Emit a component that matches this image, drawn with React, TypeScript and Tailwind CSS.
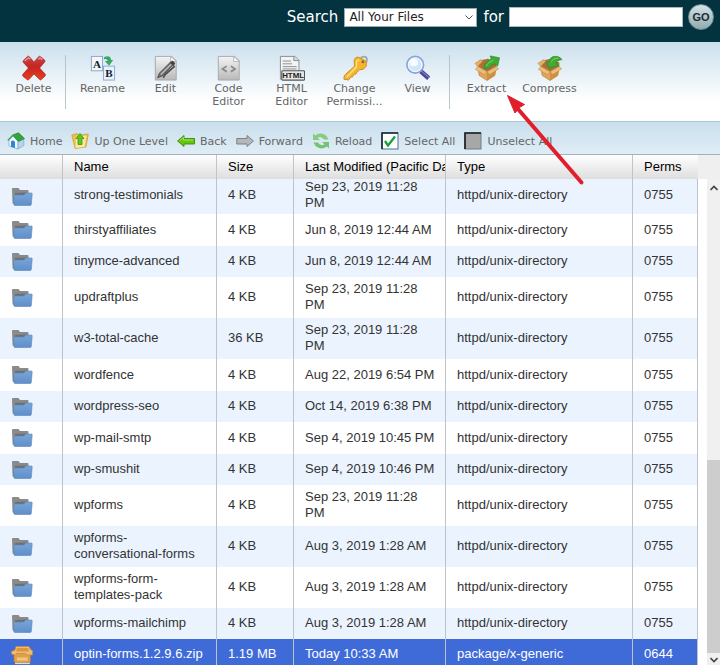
import type { ReactNode } from "react";

type FileRow = { name: string; size: string; date: string; type: string; perms: string; selected?: boolean };

const DIR = "httpd/unix-directory";

const files: FileRow[] = [
  { name: "strong-testimonials", size: "4 KB", date: "Sep 23, 2019 11:28 PM", type: DIR, perms: "0755" },
  { name: "thirstyaffiliates", size: "4 KB", date: "Jun 8, 2019 12:44 AM", type: DIR, perms: "0755" },
  { name: "tinymce-advanced", size: "4 KB", date: "Jun 8, 2019 12:44 AM", type: DIR, perms: "0755" },
  { name: "updraftplus", size: "4 KB", date: "Sep 23, 2019 11:28 PM", type: DIR, perms: "0755" },
  { name: "w3-total-cache", size: "36 KB", date: "Sep 23, 2019 11:28 PM", type: DIR, perms: "0755" },
  { name: "wordfence", size: "4 KB", date: "Aug 22, 2019 6:54 PM", type: DIR, perms: "0755" },
  { name: "wordpress-seo", size: "4 KB", date: "Oct 14, 2019 6:38 PM", type: DIR, perms: "0755" },
  { name: "wp-mail-smtp", size: "4 KB", date: "Sep 4, 2019 10:45 PM", type: DIR, perms: "0755" },
  { name: "wp-smushit", size: "4 KB", date: "Sep 4, 2019 10:46 PM", type: DIR, perms: "0755" },
  { name: "wpforms", size: "4 KB", date: "Sep 23, 2019 11:28 PM", type: DIR, perms: "0755" },
  { name: "wpforms-conversational-forms", size: "4 KB", date: "Aug 3, 2019 1:28 AM", type: DIR, perms: "0755" },
  { name: "wpforms-form-templates-pack", size: "4 KB", date: "Aug 3, 2019 1:28 AM", type: DIR, perms: "0755" },
  { name: "wpforms-mailchimp", size: "4 KB", date: "Aug 3, 2019 1:28 AM", type: DIR, perms: "0755" },
  { name: "optin-forms.1.2.9.6.zip", size: "1.19 MB", date: "Today 10:33 AM", type: "package/x-generic", perms: "0644", selected: true },
];

/* ---------- toolbar icons, drawn on a 28 x 28 grid ---------- */

function Big({ children }: { children: ReactNode }) {
  return (
    <svg viewBox="0 0 28 28" className="mt-px mb-px h-[26px] w-[26px]" aria-hidden="true">
      {children}
    </svg>
  );
}

function DeleteIcon() {
  return (
    <Big>
      <defs>
        <linearGradient id="del" x1="0" y1="0" x2="0" y2="1">
          <stop offset="0" stopColor="#c8474a" />
          <stop offset="0.45" stopColor="#c32523" />
          <stop offset="1" stopColor="#ea3f1e" />
        </linearGradient>
      </defs>
      <path d="M2.500 6 7 1.500Q8 0.800 9 1.800L14 7.500 19 1.800Q20 0.800 21 1.800L25.500 5.500Q26.300 6.500 25.500 7.500L20 14 26 20.500Q26.800 21.500 26 22.500L22 26.500Q21 27.300 20 26.500L14 20.500 8.500 26.500Q7.500 27.300 6.500 26.500L2 22.800Q1.200 21.800 2 20.800L8 14 2.500 8Q1.800 7 2.500 6Z" fill="url(#del)" stroke="#a8231e" strokeWidth="0.7" />
      <path d="M4 6.500 8 3 10 4.500M18.500 4.500 20.500 3.200 23 5" fill="none" stroke="#e59a98" strokeWidth="1.400" />
    </Big>
  );
}

function RenameIcon() {
  return (
    <Big>
      <rect x="1.500" y="1.500" width="12" height="15.500" fill="#f2f7fd" stroke="#8ba4c6" />
      <rect x="14.500" y="12" width="12" height="15" fill="#e8f1fc" stroke="#8ba8ce" />
      <text x="7.500" y="13.500" textAnchor="middle" fontSize="12" fontWeight="700" fontFamily="Liberation Serif, serif" fill="#151c2c">A</text>
      <text x="20.500" y="24" textAnchor="middle" fontSize="12" fontWeight="700" fontFamily="Liberation Serif, serif" fill="#151c2c">B</text>
      <path d="M15 2.500Q22 -1 22.800 5.500H25L20.500 11.500 16 6.500H19Q18.500 3.500 15 4.500Z" fill="#3aa866" />
    </Big>
  );
}

function Page() {
  return (
    <>
      <defs>
        <linearGradient id="page" x1="0" y1="0" x2="0" y2="1">
          <stop offset="0" stopColor="#f4f4f4" />
          <stop offset="1" stopColor="#b9b9b9" />
        </linearGradient>
      </defs>
      <path d="M2.500 1.500H20L25 6V27H2.500Z" fill="url(#page)" stroke="#a3a7aa" />
      <path d="M19 1.500V7H25Z" fill="#fff" stroke="#a3a7aa" strokeWidth="0.800" />
    </>
  );
}

function EditIcon() {
  return (
    <Big>
      <Page />
      <path d="M5 24.500 7 19.500 19 7.500 22 10.500 10 22.500Z" fill="#777" stroke="#3f3f3f" strokeWidth="0.900" />
      <path d="M8.500 21 20 9.500" stroke="#c4c4c4" strokeWidth="1.200" />
      <path d="M11 24.500 13 21 23.500 12" fill="none" stroke="#4a4a4a" strokeWidth="1.800" />
      <path d="M18 8 21 6 24 9 22 12Z" fill="#444" />
    </Big>
  );
}

function CodeIcon() {
  return (
    <Big>
      <Page />
      <path d="M11.500 12 7 15 11.500 18M16 12 20.500 15 16 18" fill="none" stroke="#858585" strokeWidth="1.800" />
    </Big>
  );
}

function HtmlIcon() {
  return (
    <Big>
      <path d="M1.500 1.500H17L21.500 5.500V26H1.500Z" fill="#f3f4f5" stroke="#85898c" />
      <path d="M16 1.500V6H21.500" fill="#ddd" stroke="#85898c" />
      <path d="M4 6.500H13M4 9.500H14M4 12.500H19M4 15H19" stroke="#85898c" />
      <rect x="3" y="17" width="24.500" height="10" rx="1" fill="#e6e6e6" stroke="#555" strokeWidth="1.200" />
      <text x="15.200" y="25" textAnchor="middle" fontSize="8.500" fontWeight="700" fontFamily="Liberation Sans, sans-serif" fill="#222">HTML</text>
    </Big>
  );
}

function KeyIcon() {
  return (
    <Big>
      <circle cx="23.500" cy="5" r="3.300" fill="none" stroke="#a2a7ab" strokeWidth="2" />
      <path d="M13 6Q14 1.500 18 2.500L24 5.500Q27.500 8 26 12 23.500 16.500 19 16L16 18.500 15 20.500 12.500 21 11.500 23.500 9 24 7 27 2 26 2.500 22 13.500 12Z" fill="#f5b52c" stroke="#c98a22" />
      <path d="M5 24 15.500 13 15.500 7 18.500 5" fill="none" stroke="#ffe08a" strokeWidth="1.500" />
      <circle cx="22.500" cy="7.500" r="1.500" fill="#8b6a26" />
    </Big>
  );
}

function ViewIcon() {
  return (
    <Big>
      <path d="M17 17.500 25.500 25" stroke="#4d4396" strokeWidth="4.800" strokeLinecap="butt" />
      <path d="M17.500 17 26 24.500" stroke="#8178bd" strokeWidth="1.200" />
      <circle cx="11" cy="10.500" r="9" fill="#d0e6fa" stroke="#8ba3dc" strokeWidth="1.800" />
      <circle cx="11" cy="10.500" r="7.300" fill="none" stroke="#fff" strokeWidth="1" />
      <ellipse cx="9.500" cy="8" rx="4.500" ry="4" fill="#f7fcff" />
    </Big>
  );
}

function Box() {
  return (
    <>
      <path d="M4 13 14 18 24 12.500 22.500 22 14 27.500 5.500 22Z" fill="#dfa457" stroke="#b57a33" strokeWidth="0.600" />
      <path d="M14 18V27.500L22.500 22 24 12.500Z" fill="#cd9046" />
      <path d="M4 12 6 6 15 4 24 8 24 12.500 14 18Z" fill="#a87236" />
      <path d="M4 12.500 1.500 15.500 11 21 14 18ZM24 12.500 26.500 15 17 21 14 18Z" fill="#edbd7a" stroke="#c28b45" strokeWidth="0.600" />
      <path d="M4 12.500 1 9 7 5 9.500 6.500Z" fill="#e3ae66" stroke="#c28b45" strokeWidth="0.600" />
    </>
  );
}

function ExtractIcon() {
  return (
    <Big>
      <Box />
      <path d="M11 14.500Q11 7.500 18.500 4.500L17.500 1 27.500 3 25.500 12 22.500 9.500Q18 10 16.500 14Z" fill="#3fab36" stroke="#278a28" strokeWidth="0.700" />
      <path d="M13 12Q15 7.500 21 5.500" fill="none" stroke="#7ed65b" />
    </Big>
  );
}

function CompressIcon() {
  return (
    <Big>
      <Box />
      <path d="M27 5Q23 0 16.500 2 13.500 3.500 13 7.500H10L13 14 23.500 11.500 20.500 9Q21 5.500 27 5Z" fill="#3fab36" stroke="#278a28" strokeWidth="0.700" />
      <path d="M15.500 7.500Q17 3.500 23 3.500" fill="none" stroke="#7ed65b" />
    </Big>
  );
}

/* ---------- navigation icons, 18 x 18 ---------- */

function Small({ children }: { children: ReactNode }) {
  return (
    <svg viewBox="0 0 18 18" className="h-[18px] w-[18px] shrink-0" aria-hidden="true">
      {children}
    </svg>
  );
}

function HomeIcon() {
  return (
    <Small>
      <path d="M2 8.500 6 4 11 9.500V17L2 14Z" fill="#f3f9ff" stroke="#7ba6cf" strokeWidth="0.700" />
      <path d="M11 9.500 16.800 7V13.500L11 17Z" fill="#b8d4ee" stroke="#7fa6cc" strokeWidth="0.700" />
      <path d="M5.500 3 11.500 0.800 17.500 6.500 11.500 9.500Z" fill="#36a43b" stroke="#248a33" strokeWidth="0.700" />
      <path d="M6 3 0.800 8.500" stroke="#4aa552" strokeWidth="1.400" />
      <path d="M4 14.800V9.500Q6 7.500 8 10V16Z" fill="#2987d4" />
    </Small>
  );
}

function UpIcon() {
  return (
    <Small>
      <path d="M0.800 3 6 1.500 8 3 17.300 2 15 15 4 16.500Z" fill="#eec04c" stroke="#cf9a35" strokeWidth="0.700" />
      <path d="M5 5 15.500 3.500 13.500 15 4.500 16Z" fill="#fbe9a0" />
      <path d="M9 1.500 13 6.500H11V12.500H7V6.500H5Z" fill="#5cc71d" stroke="#3b9420" strokeWidth="0.800" />
    </Small>
  );
}

function BackIcon() {
  return (
    <Small>
      <path d="M0.500 9 7 3.500V6.500H17.500V12H7V14.500Z" fill="#62c60d" stroke="#3c8a0c" strokeWidth="0.900" />
      <path d="M3 8.500 6.500 5.500V8H16" fill="none" stroke="#b2ec6c" strokeWidth="0.800" />
    </Small>
  );
}

function ForwardIcon() {
  return (
    <Small>
      <path d="M17.500 9 11 3.500V6.500H0.800V12H11V14.500Z" fill="#b5b8ba" stroke="#7d8184" strokeWidth="1" />
    </Small>
  );
}

function ReloadIcon() {
  return (
    <Small>
      <path d="M1 1.500 3 3.500Q9 -0.500 14.500 4L16.500 7.500H12Q9.500 3.500 5.500 5.800L8 8H1Z" fill="#83cc80" />
      <path d="M17 16.500 15 14.500Q9 18.500 3.500 14L1.500 10.500H6Q8.500 14.500 12.500 12.200L10 10H17Z" fill="#74c374" />
    </Small>
  );
}

function CheckedIcon() {
  return (
    <Small>
      <rect x="1" y="1" width="16" height="16" fill="#fff" stroke="#4f7191" />
      <path d="M1 17V1H17" fill="none" stroke="#142536" strokeWidth="1.600" />
      <path d="M4 9 7 13.500 14 4.500" fill="none" stroke="#16a035" strokeWidth="2.300" />
    </Small>
  );
}

function UncheckedIcon() {
  return (
    <Small>
      <rect x="1" y="1" width="16" height="16" fill="#a7a7a7" stroke="#6e7d8d" />
      <path d="M1 17V1H17" fill="none" stroke="#151a22" strokeWidth="1.600" />
    </Small>
  );
}

/* ---------- table icons ---------- */

function FolderIcon() {
  return (
    <svg viewBox="0 0 22 20" className="h-5 w-[22px]" aria-hidden="true">
      <defs>
        <linearGradient id="folder" x1="0" y1="0" x2="0" y2="1">
          <stop offset="0" stopColor="#79a5d8" />
          <stop offset="1" stopColor="#5f8fca" />
        </linearGradient>
      </defs>
      <path d="M1 2Q1 1 2 1H7.500L9 3H16.500Q17.500 3 17.500 4V17H3Q1.500 17 1.500 15.500Z" fill="#8a8a8a" />
      <path d="M4 6 15.500 5.500V8H4Z" fill="#6d6f72" />
      <path d="M3.500 8H13L14.500 6H20.500Q21.300 6 21.200 7L20.300 17.500Q20.200 18.500 19.200 18.500H4Q3 18.500 2.900 17.500L2.800 9Z" fill="url(#folder)" stroke="#5b86ba" strokeWidth="0.600" />
    </svg>
  );
}

function ZipIcon() {
  return (
    <svg viewBox="0 0 22 20" className="h-5 w-[22px]" aria-hidden="true">
      <path d="M3 8H19.500V16Q19.500 18 17.500 18H5Q3 18 3 16Z" fill="#dfa04c" stroke="#b87a2e" strokeWidth="0.700" />
      <path d="M5 1.500H18L19.500 4.500 21.500 5.500V10H16L14.500 8.500H5.500L4 10 0.500 9V6.500L4 5Z" fill="#f0bb6c" stroke="#c98a3a" strokeWidth="0.700" />
      <path d="M6 3H17L18 6.500H5Z" fill="#d9983f" />
      <path d="M6 12.500H16.500V15.500H6Z" fill="#f2c581" />
      <path d="M4 18.500H19" stroke="#cfdcf5" strokeWidth="1.200" />
    </svg>
  );
}

/* ---------- controls ---------- */

function Tool({ icon, label }: { icon: ReactNode; label: ReactNode }) {
  return (
    <button type="button" className="flex w-[63px] shrink-0 flex-col items-center text-[11px] leading-[13px]">
      {icon}
      <span className="max-w-full">{label}</span>
    </button>
  );
}

function Divider() {
  return <span className="mt-px mr-[5px] h-[54px] w-px shrink-0 bg-[#b9c5cd]" />;
}

function Nav({ icon, label }: { icon: ReactNode; label: string }) {
  return (
    <button type="button" className="flex shrink-0 items-center gap-[5px] whitespace-nowrap text-[11px] leading-[13px]">
      {icon}
      {label}
    </button>
  );
}

const head = "overflow-hidden border-r border-[#c3c3c3] pl-[11px] text-left font-normal whitespace-nowrap last:border-r-0";
const cell = "border-r border-[#bcc3cb] pt-1 pb-[5px] pl-[11px] pr-2 align-middle group-first:pt-0 group-first:pb-[3px]";

export default function App() {
  return (
    <div className="relative flex h-screen flex-col overflow-hidden bg-white font-['DejaVu_Sans',sans-serif] text-[#666]">
      <header className="flex h-[42px] shrink-0 items-start justify-end bg-[#02333f] pt-1 pr-[6px] text-[15px] text-white">
        <div className="flex h-[26px] items-center">
          <label htmlFor="scope" className="mr-[6px]">Search</label>
          <span className="relative mr-[6px] block h-[19px] w-[133px]">
            <select id="scope" className="block h-full w-full appearance-none border border-[#9aa9ad] bg-white pl-1 text-[12px] leading-[16px] text-[#222]">
              <option>All Your Files</option>
            </select>
            <svg viewBox="0 0 8 5" className="pointer-events-none absolute top-[7px] right-1 h-[5px] w-2" aria-hidden="true">
              <path d="M0.500 0.500 4 4 7.500 0.500" fill="none" stroke="#555" />
            </svg>
          </span>
          <label htmlFor="query" className="mr-[5px]">for</label>
          <input id="query" type="text" className="mr-[5px] h-5 w-[174px] border border-[#a9b7ba] bg-white px-1 text-[12px] text-[#222]" />
          <button type="button" className="h-[26px] w-[26px] rounded-full border border-[#6f8d94] bg-linear-to-b from-[#d5e3e6] to-[#90abb1] text-center font-['Liberation_Sans',sans-serif] text-[11px] leading-[24px] font-bold text-[#1d2b30]">
            GO
          </button>
        </div>
      </header>

      <div className="flex h-20 shrink-0 items-start border-b border-[#a9c6d5] bg-linear-to-b from-[#cbe0ed] to-white to-75% pt-3 pl-[2px]">
        <Tool icon={<DeleteIcon />} label="Delete" />
        <Divider />
        <Tool icon={<RenameIcon />} label="Rename" />
        <Tool icon={<EditIcon />} label="Edit" />
        <Tool icon={<CodeIcon />} label={<>Code<br />Editor</>} />
        <Tool icon={<HtmlIcon />} label={<>HTML<br />Editor</>} />
        <Tool icon={<KeyIcon />} label={<>Change<br />Permissi...</>} />
        <Tool icon={<ViewIcon />} label="View" />
        <Divider />
        <Tool icon={<ExtractIcon />} label="Extract" />
        <Tool icon={<CompressIcon />} label="Compress" />
      </div>

      <nav className="flex h-[33px] shrink-0 items-center gap-[9px] border-b border-[#9fb3be] bg-linear-to-b from-[#c9dfec] to-[#e0edf6] pt-[6px] pl-[7px]">
        <Nav icon={<HomeIcon />} label="Home" />
        <Nav icon={<UpIcon />} label="Up One Level" />
        <Nav icon={<BackIcon />} label="Back" />
        <Nav icon={<ForwardIcon />} label="Forward" />
        <Nav icon={<ReloadIcon />} label="Reload" />
        <Nav icon={<CheckedIcon />} label="Select All" />
        <Nav icon={<UncheckedIcon />} label="Unselect All" />
      </nav>

      <main className="flex min-h-0 flex-1 font-['Liberation_Sans',Arial,sans-serif] text-[13px] leading-4 text-[#333]">
        <div className="min-w-0 flex-1 overflow-hidden">
          <table className="w-full table-fixed border-separate border-spacing-0">
            <colgroup>
              <col className="w-[63px]" />
              <col className="w-[154px]" />
              <col className="w-[77px]" />
              <col className="w-[152px]" />
              <col />
              <col className="w-[65px]" />
            </colgroup>
            <thead className="text-black">
              <tr className="h-6 bg-linear-to-b from-white to-[#dedede]">
                <th className={head} aria-label="Icon" />
                <th className={head}>Name</th>
                <th className={head}>Size</th>
                <th className={head}>Last Modified (Pacific Da</th>
                <th className={head}>Type</th>
                <th className={head}>Perms</th>
              </tr>
            </thead>
            <tbody>
              {files.map((f) => (
                <tr
                  key={f.name}
                  className={
                    f.selected
                      ? "group h-[31px] bg-[#3f6bd9] text-white"
                      : "group odd:h-[31px] odd:bg-[#ebf4fe] even:h-8 even:bg-white"
                  }
                >
                  <td className="border-r border-[#bcc3cb] pl-[11px] align-middle">{f.selected ? <ZipIcon /> : <FolderIcon />}</td>
                  <td className={cell}>{f.name}</td>
                  <td className={cell}>{f.size}</td>
                  <td className={cell}>{f.date}</td>
                  <td className={cell}>{f.type}</td>
                  <td className={cell}>{f.perms}</td>
                </tr>
              ))}
            </tbody>
          </table>
        </div>

        <div className="flex w-[22px] shrink-0 flex-col">
          <div className="h-6 shrink-0 bg-[#efefef]" />
          <div className="flex min-h-0 flex-1 justify-end">
            <div className="flex w-[13px] flex-col items-center bg-[#f0f0f0]">
              <svg viewBox="0 0 8 6" className="mt-[6px] h-[6px] w-2 shrink-0" aria-hidden="true">
                <path d="M0.500 5 4 1.500 7.500 5" fill="none" stroke="#444" strokeWidth="1.600" />
              </svg>
              <div className="min-h-0 flex-[270]" />
              <div className="min-h-0 w-full flex-[193] bg-[#cdcdcd]" />
              <svg viewBox="0 0 8 6" className="mt-1 mb-[2px] h-[6px] w-2 shrink-0" aria-hidden="true">
                <path d="M0.500 1 4 4.500 7.500 1" fill="none" stroke="#444" strokeWidth="1.600" />
              </svg>
            </div>
          </div>
        </div>
      </main>

      <svg viewBox="0 0 80 92" className="pointer-events-none absolute top-[95px] left-[506px] h-[92px] w-20" aria-hidden="true">
        <path d="M12 14 75.500 87.500" stroke="#e01f2b" strokeWidth="4" strokeLinecap="round" />
        <path d="M1.500 0.500 18.500 9.500 13.500 12.500 9 18Z" fill="#e01f2b" stroke="#e01f2b" strokeWidth="1" />
      </svg>
    </div>
  );
}
